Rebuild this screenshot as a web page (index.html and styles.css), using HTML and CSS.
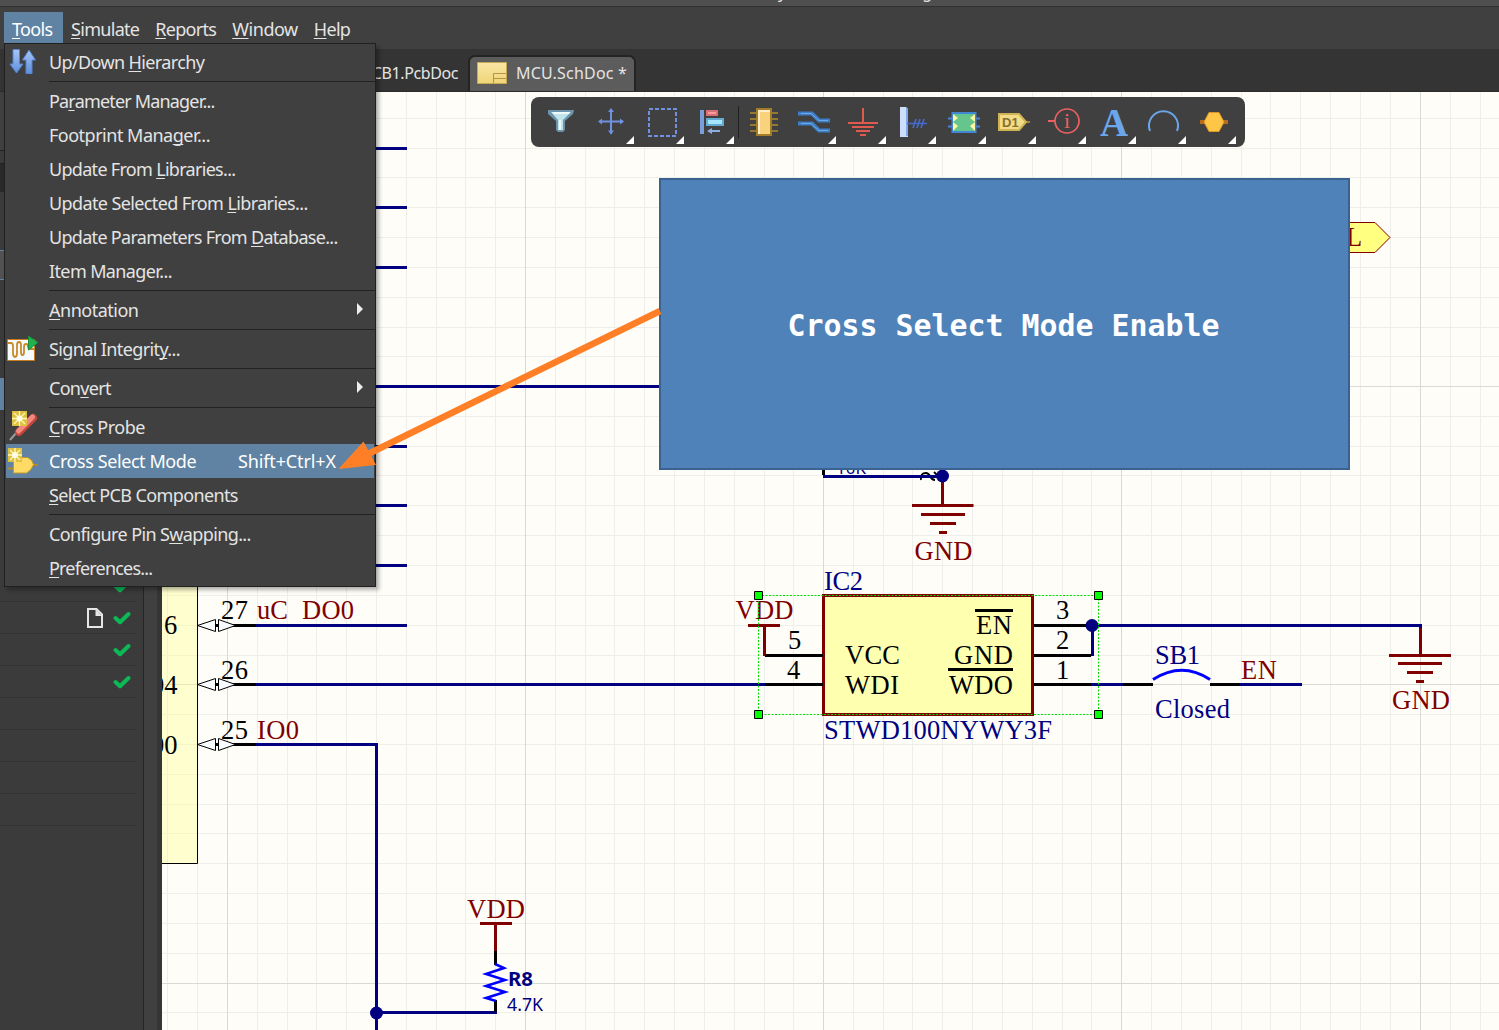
FILE: index.html
```html
<!DOCTYPE html>
<html lang="en">
<head>
<meta charset="utf-8">
<title>MCU.SchDoc</title>
<link rel="stylesheet" href="styles.css">
</head>
<body>
<div class="app">
  <div class="titlebar"><span>y</span><span>g</span></div>
  <nav class="menubar">
    <span class="menu-tab active"><u>T</u>ools</span>
    <span class="menu-tab"><u>S</u>imulate</span>
    <span class="menu-tab"><u>R</u>eports</span>
    <span class="menu-tab window"><u>W</u>indow</span>
    <span class="menu-tab"><u>H</u>elp</span>
  </nav>
  <div class="tabs">
    <div class="tab">PCB1.PcbDoc</div>
    <div class="tab current">
      <svg width="30" height="22" viewBox="0 0 30 22"><defs><linearGradient id="doc" x2="0" y2="1"><stop stop-color="#fae6a5"/><stop offset="1" stop-color="#efd578"/></linearGradient></defs><path d="M.5.5h29v21H.5z" fill="url(#doc)" stroke="#c7a955"/><path d="M16.500 21V11.500H29M17 16.500h12" fill="none" stroke="#b3954a"/></svg>
      <span>MCU.SchDoc *</span>
    </div>
  </div>
  <div class="workspace">
    <aside class="panel">
      <div class="strip">
        <i class="s1"></i><i class="s2"></i><i class="s3"></i><i class="s4"></i><i class="s5"></i><i class="s6"></i><i class="s7"></i>
      </div>
      <div class="files">
        <div class="file first"><svg class="check" viewBox="0 0 18 14"><path d="M2.500 7l4.500 4.200L15.500 3" /></svg></div>
        <div class="file"><svg class="page" viewBox="0 0 16 20"><path d="M1 1h8.500l5.500 5.500V19H1z" fill="none" stroke="#e6e6e6" stroke-width="2"/><path d="M8.500 1v7H15z" fill="#e6e6e6"/></svg><svg class="check" viewBox="0 0 18 14"><path d="M2.500 7l4.500 4.200L15.500 3" /></svg></div>
        <div class="file"><svg class="check" viewBox="0 0 18 14"><path d="M2.500 7l4.500 4.200L15.500 3" /></svg></div>
        <div class="file"><svg class="check" viewBox="0 0 18 14"><path d="M2.500 7l4.500 4.200L15.500 3" /></svg></div>
        <div class="file"></div><div class="file"></div><div class="file"></div><div class="file"></div>
      </div>
    </aside>
    <div class="splitter"></div>
    <svg class="sheet" viewBox="162 92 1337 938" width="1337" height="938">
      <path class="grid" d="M167.500 92v938M197.500 92v938M257.500 92v938M287.500 92v938M316.500 92v938M346.500 92v938M376.500 92v938M406.500 92v938M436.500 92v938M465.500 92v938M495.500 92v938M555.500 92v938M585.500 92v938M614.500 92v938M644.500 92v938M674.500 92v938M704.500 92v938M734.500 92v938M764.500 92v938M793.500 92v938M853.500 92v938M883.500 92v938M912.500 92v938M942.500 92v938M972.500 92v938M1002.500 92v938M1032.500 92v938M1062.500 92v938M1091.500 92v938M1151.500 92v938M1181.500 92v938M1211.500 92v938M1241.500 92v938M1270.500 92v938M1300.500 92v938M1330.500 92v938M1360.500 92v938M1390.500 92v938M1450.500 92v938M1480.500 92v938"/>
      <path class="grid" d="M162 118.500h1337M162 148.500h1337M162 177.500h1337M162 207.500h1337M162 237.500h1337M162 267.500h1337M162 297.500h1337M162 327.500h1337M162 356.500h1337M162 416.500h1337M162 446.500h1337M162 475.500h1337M162 505.500h1337M162 535.500h1337M162 565.500h1337M162 595.500h1337M162 625.500h1337M162 655.500h1337M162 714.500h1337M162 744.500h1337M162 774.500h1337M162 804.500h1337M162 833.500h1337M162 863.500h1337M162 893.500h1337M162 923.500h1337M162 953.500h1337M162 1012.500h1337"/>
      <path class="grid major" d="M227.500 92v938M525.500 92v938M823.500 92v938M1121.500 92v938M1420.500 92v938M162 386.500h1337M162 684.500h1337M162 983.500h1337"/>
      <!-- microcontroller edge -->
      <path d="M160 500h37.500v363.500H160" fill="#ffff80" fill-opacity=".35" stroke="#000"/>
      <g class="sheet-text pin">
        <text x="164" y="634">6</text><text x="151" y="694">04</text><text x="151" y="754">00</text>
        <text x="221" y="619" textLength="27">27</text><text x="221" y="679" textLength="27">26</text><text x="221" y="739" textLength="27">25</text>
      </g>
      <path d="M232 625.500h24M232 684.500h24M232 744.500h24" stroke="#000" stroke-width="3"/>
      <path d="M197.500 625.500l18-6v12zM218.500 619.500v12l17-6zM197.500 684.500l18-6v12zM218.500 678.500v12l17-6zM197.500 744.500l18-6v12zM218.500 738.500v12l17-6z" fill="#f8fbff" stroke="#000"/>
      <path d="M215 625.500h4M215 684.500h4M215 744.500h4" stroke="#000" stroke-width="3"/>
      <path class="wire" d="M370 148.500h37M370 207.500h37M370 267.500h37M370 386.500h300M370 446.500h37M370 505.500h37M370 565.500h37M256 625.500h151M256 684.500h509M256 744.500h120.500V1030M376.500 1012.500H497M823 476.500h120M1092 625.500h328.500V629M1092.500 625v31M1091 684.500h32M1240 684.500h62"/>
      <g class="sheet-text red">
        <text x="257" y="619" textLength="31">uC</text><text x="302" y="619" textLength="52">DO0</text>
        <text x="257" y="739" textLength="42">IO0</text>
        <text x="467" y="918" textLength="58">VDD</text>
        <text x="735.500" y="619" textLength="58">VDD</text>
        <text x="914.500" y="560" textLength="58">GND</text>
        <text x="1392" y="709" textLength="58">GND</text>
        <text x="1241" y="679" textLength="36">EN</text>
      </g>
      <circle class="dot" cx="376.500" cy="1013" r="6.500"/>
      <!-- pull-up resistor -->
      <path class="power" d="M480 923.500h32M495.500 923v29M748 625.500h32M764.500 625v31M942.500 480v26M912 505.500h61.500M921 514.500h44M930 523.500h26M939 532.500h8M1420.500 628v27M1389 655.500h62M1398 663.500h44M1407 672.500h26M1416 681.500h8"/>
      <path d="M495.500 951v14M495.500 1000v12" stroke="#000" stroke-width="3"/>
      <path d="M495 964l9 4-18 6 19 6-19 6 19 6-19 6 10 3" fill="none" stroke="#00f" stroke-width="2.500"/>
      <text class="ui-label" x="508" y="986" font-weight="700" font-size="19" textLength="25" lengthAdjust="spacingAndGlyphs">R8</text>
      <text class="ui-label" x="507" y="1011" font-size="17.500" textLength="36" lengthAdjust="spacingAndGlyphs">4.7K</text>
      <!-- watchdog IC -->
      <rect x="823.500" y="595.500" width="209" height="119" fill="#ffffb0" stroke="#800000" stroke-width="3"/>
      <path d="M765 655.500h58M765 684.500h58M1034 625.500h55M1034 655.500h57M1034 684.500h57M975 610.500h38M948 669.500h65M1123 684.500h30M1210 684.500h30" stroke="#000" stroke-width="3"/>
      <g class="sheet-text pin">
        <text x="788" y="649">5</text><text x="787" y="679">4</text>
        <text x="1056" y="619">3</text><text x="1056" y="649">2</text><text x="1056" y="679">1</text>
        <text x="845" y="664" textLength="55">VCC</text><text x="845" y="694" textLength="54">WDI</text>
        <text x="976" y="634" textLength="36">EN</text><text x="954" y="664" textLength="59">GND</text><text x="949" y="694" textLength="64">WDO</text>
      </g>
      <g class="sheet-text blue">
        <text x="824" y="590" textLength="39">IC2</text>
        <text x="824" y="739" textLength="228">STWD100NYWY3F</text>
        <text x="1155" y="664" textLength="45">SB1</text>
        <text x="1155" y="718" textLength="75">Closed</text>
      </g>
      <path d="M1153 679.500q29-18.500 57 0" fill="none" stroke="#00f" stroke-width="3"/>
      <circle class="dot" cx="1092" cy="625.500" r="6.500"/>
      <path d="M758.500 595.500h340v119h-340z" fill="none" stroke="#00e000" stroke-dasharray="2 1.500"/>
      <path d="M754.500 591.500h8v8h-8zM1094.500 591.500h8v8h-8zM754.500 710.500h8v8h-8zM1094.500 710.500h8v8h-8z" fill="#0f0" stroke="#000"/>
      <!-- parts partly behind the callout -->
      <path d="M823.500 468v7" stroke="#000" stroke-width="3"/>
      <text class="ui-label" x="836" y="474" font-size="17" textLength="30">10K</text>
      <path d="M921 480q-1-7 5-7c5 0 3 7 9 7M934 472l4 4" fill="none" stroke="#000" stroke-width="1.800"/>
      <path class="wire" d="M915 476.500h25"/>
      <circle class="dot" cx="942.500" cy="476" r="6.500"/>
      <path d="M1340 222.500h35l15 15-15 15h-35z" fill="#ffff80" stroke="#800000"/>
      <text class="sheet-text red" x="1346" y="246">L</text>
    </svg>
  </div>

  <div class="toolbar">
    <svg width="714" height="50" viewBox="531 97 714 50">
      <path d="M548 110h26l-1 4-8 7v9l-2 2h-5l-2-2v-9l-8-7z" fill="#6d93ad"/><path d="M551 112h20l-8 8v10h-5V120z" fill="#c0e4ea"/><path d="M552 112h18l-1 2h-15zM559 120h2v10h-2z" fill="#eefafa"/>
      <g fill="none" stroke="#7090e0" stroke-width="2"><path d="M611 110v24M600 121.500h23"/><path d="M649 109h27v27h-27z" stroke-dasharray="4 2"/></g>
      <path d="M611 108l3 4h-6zM611 134.500l3-4h-6zM598 121.500l4-3v6zM624 121.500l-4-3v6z" fill="#7090e0"/>
      <path d="M700 110h4v24h-4z" fill="#799fdb"/><path d="M706 110h12v6h-12z" fill="#d76e73"/><path d="M708 112h8v2h-8z" fill="#ff9c99"/><path d="M706 118h18v8h-18z" fill="#64aace"/><path d="M708 120h14v4h-14z" fill="#a5e6ff"/><path d="M707 131l5-3v2h8v2h-8v2z" fill="#8eace0"/>
      <path d="M738.500 106v32" stroke="#202020"/>
      <path d="M750 113h28M750 119h28M750 125h28M750 131h28" stroke="#967931" stroke-width="2"/><path d="M756 108h16v28h-16z" fill="#a17d2a"/><path d="M758 110h12v24h-12z" fill="#f8d27c"/><path d="M758 110h12v2h-10v22h-2z" fill="#ffedca"/>
      <g fill="none"><path d="M798 113.500h14l7 7h11M798 123.500h14l7 7h11" stroke="#3c7fc8" stroke-width="4"/><path d="M801 113.500h10l8 7h9M801 123.500h10l8 7h9" stroke="#6fa9e2"/></g>
      <path d="M863 108v15M848 123h30M852 127h22M856 131h14M860 135h6" stroke="#e05a50" stroke-width="2"/>
      <path d="M900 107h6l2 2v28h-8z" fill="#cddffa"/><path d="M906 108h2v28h-2z" fill="#80a9e9"/><path d="M907 123.500h20M913 128l3-9M917 128l3-9M921 128l3-9" stroke="#4668c9" stroke-width="1.700"/>
      <path d="M948 118.500h32M948 126.500h32" stroke="#4b82db" stroke-width="2"/><path d="M952.500 113h23v19h-23z" fill="#66c48d" stroke="#4285d2" stroke-width="2"/><path d="M953 114l5 4-5 4 5 4-5 5zM975 114l-5 4 5 4-5 4 5 5z" fill="#fcf6a0"/>
      <path d="M1022 122h8" stroke="#a18435" stroke-width="2"/><path d="M999 114h20l7 8-7 8h-20z" fill="#f3dc87" stroke="#d0b352" stroke-width="2"/><text x="1002" y="127" class="tag">D1</text>
      <circle cx="1067" cy="121" r="12" fill="none" stroke="#ed6062" stroke-width="1.700"/><path d="M1048 121h7" stroke="#ed6062" stroke-width="2"/><text x="1067" y="128" class="info">i</text>
      <text x="1114" y="136" class="letter">A</text>
      <path d="M1150 131a14.500 14.500 0 1 1 27 0" fill="none" stroke="#6aa5e8" stroke-width="2"/>
      <path d="M1200 122h28" stroke="#b96b1d" stroke-width="4"/><path d="M1209 112.500h10l5 9.500-5 9.500h-10l-5-9.500z" fill="#ffc547" stroke="#dd9726"/>
      <path fill="#fff" d="M634 136v8h-8zM684 136v8h-8zM734 136v8h-8zM836 136v8h-8zM886 136v8h-8zM936 136v8h-8zM986 136v8h-8zM1036 136v8h-8zM1086 136v8h-8zM1136 136v8h-8zM1186 136v8h-8zM1236 136v8h-8z"/>
    </svg>
  </div>

  <div class="callout">Cross Select Mode Enable</div>

  <div class="menu">
    <div class="item"><svg class="icon" viewBox="6 46 32 32"><defs><linearGradient id="blue" x2="0" y2="1"><stop stop-color="#a9c6f5"/><stop offset="1" stop-color="#5d8ee0"/></linearGradient></defs><path d="M13 49.500h6.500V64H23l-6.500 9L10 64h3zM26 73.500V60h-3.500l6.500-10 6.500 10H32v13.500z" fill="url(#blue)" stroke="#5684cf"/></svg><span>Up/Down <u>H</u>ierarchy</span></div>
    <hr>
    <div class="item tight"><span>Pa<u>r</u>ameter Manager...</span></div>
    <div class="item loose"><span>Footprint Mana<u>g</u>er...</span></div>
    <div class="item snug"><span>Update From <u>L</u>ibraries...</span></div>
    <div class="item"><span>Update Selected From <u>L</u>ibraries...</span></div>
    <div class="item snug"><span>Update Parameters From <u>D</u>atabase...</span></div>
    <div class="item"><span>Item Manager...</span></div>
    <hr>
    <div class="item loose"><span><u>A</u>nnotation</span><i class="more"></i></div>
    <hr>
    <div class="item"><svg class="icon" viewBox="6 333 32 32"><path d="M7.500 339.500h27v21h-27z" fill="#f6faff" stroke="#c77c1f"/><path d="M8 343h3q2 0 2 3v7q0 4 2 4t2-4v-8q0-3 2-3t2 3v7q0 3 1.500 3t1.500-3v-5q0-3 2-3t2 3q0 2 3 2h4" fill="none" stroke="#c98926" stroke-width="1.800"/><path d="M28.500 336v14l9.500-7.500z" fill="#23b14d" stroke="#158f39"/></svg><span>Signal Integrit<u>y</u>...</span></div>
    <hr>
    <div class="item snug"><span>Con<u>v</u>ert</span><i class="more"></i></div>
    <hr>
    <div class="item loose"><svg class="icon" viewBox="6 411 32 32"><path d="M10 440l7-8" stroke="#999" stroke-width="2"/><path d="M19 432l14-14" stroke="#c6463d" stroke-width="8" stroke-linecap="round"/><path d="M18.500 431l14-14" stroke="#f08a80" stroke-width="5" stroke-linecap="round"/><path d="M12 411h15v15H12z" fill="#dfc040"/><path d="M19.500 411v15M12 418.500h15M14 413l11 11M25 413l-11 11" stroke="#fff8b8" stroke-width="1.300"/><circle cx="19.500" cy="418.500" r="3" fill="#fffde6"/></svg><span><u>C</u>ross Probe</span></div>
    <div class="item selected"><svg class="icon" viewBox="6 445 32 32"><path d="M8 468.500h6M32 465h6" stroke="#b48b20" stroke-width="2"/><path d="M13.500 457.500h14q5 2 6 7-2 6-7 8.500h-13z" fill="#ffdb65" stroke="#c49a28"/><path d="M8 448h14v14H8z" fill="#dfc040"/><path d="M15 448v14M8 455h14M10 450l10 10M20 450l-10 10" stroke="#fff8b8" stroke-width="1.300"/><circle cx="15" cy="455" r="3" fill="#fffde6"/></svg><span>Cross Select Mode</span><span class="keys">Shift+Ctrl+X</span></div>
    <div class="item"><span><u>S</u>elect PCB Components</span></div>
    <hr>
    <div class="item"><span>Configure Pin S<u>w</u>apping...</span></div>
    <div class="item tight"><span><u>P</u>references...</span></div>
  </div>

  <svg class="arrow" viewBox="330 300 340 180" width="340" height="180"><path d="M660 311L368 454" stroke="#ff7f27" stroke-width="6.500"/><path d="M338.500 469l25-27.500L376 465z" fill="#ff7f27"/></svg>
</div>
</body>
</html>
```
FILE: styles.css
```css
* { box-sizing: border-box; }
body { margin: 0; background: #404040; font-family: "Noto Sans", "Open Sans", sans-serif; color: #e4e4e4; }
u { text-decoration-thickness: 1px; text-underline-offset: 2px; text-decoration-skip-ink: none; }
.app { position: relative; width: 1499px; height: 1030px; overflow: hidden; display: flex; flex-direction: column; }
.titlebar { height: 7px; background: #4f4f4f; border-bottom: 1px solid #303030; overflow: hidden; display: flex; gap: 136px; padding-left: 778px; font-size: 16px; line-height: 20px; }
.titlebar span { height: 20px; margin-top: -18px; }
.menubar { height: 42px; padding: 5px 0 0 4px; display: flex; align-items: flex-start; font-size: 18px; letter-spacing: -.7px; }
.menu-tab { height: 32px; line-height: 34px; padding: 0 8px; white-space: nowrap; }
.menu-tab.active { background: #6083a3; color: #fff; width: 59px; }
.menu-tab.window { letter-spacing: -.45px; }
.tabs { height: 43px; background: #343434; border-bottom: 1px solid #2b2b2b; display: flex; align-items: flex-end; font-size: 16px; }
.tab { width: 468px; padding: 0 10px 0 0; height: 36px; line-height: 37px; text-align: right; letter-spacing: -.4px; }
.tab.current { width: 168px; background: #5c5c5c; border: 2px solid #242424; border-bottom: 0; border-radius: 7px 7px 0 0; display: flex; align-items: center; padding: 0 0 2px 7px; gap: 9px; white-space: nowrap; line-height: 30px; letter-spacing: .2px; }
.workspace { flex: 1; display: flex; min-height: 0; }
.panel { width: 144px; background: #3b3b3b; border-right: 1px solid #252525; display: flex; flex-direction: column; }
.strip { width: 6px; height: 478px; display: flex; flex-direction: column; }
.strip i { display: block; }
.s1 { height: 58px; background: #404040; }
.s2 { height: 14px; border-top: 1px solid #222; border-bottom: 1px solid #222; }
.s3 { height: 28px; background: #292929; }
.s4 { height: 58px; background: #3b3b3b; }
.s5 { height: 30px; background: #525252; border: 1px solid #6083a3; border-width: 1px 0; }
.s6 { height: 98px; }
.s7 { height: 32px; background: #6083a3; }
.files { width: 136px; }
.file { height: 32px; border-bottom: 1px solid #333; display: flex; align-items: center; justify-content: flex-end; gap: 10px; padding-right: 5px; }
.check { width: 18px; height: 14px; fill: none; stroke: #0cb956; stroke-width: 4; stroke-linecap: round; stroke-linejoin: round; }
.page { width: 16px; height: 20px; }
.splitter { width: 18px; background: #404040; border-right: 5px solid #353535; }
.sheet { display: block; background: #fffdf8; }
.grid { stroke: #eeefeb; fill: none; }
.grid.major { stroke: #d8dad6; }
.wire { stroke: #000080; stroke-width: 3; fill: none; }
.power { stroke: #800000; stroke-width: 3; fill: none; }
.dot { fill: #000080; }
.sheet-text { font-family: "Liberation Serif", serif; font-size: 26.5px; }
.pin { fill: #000; }
.red { fill: #800000; }
.blue { fill: #000080; }
.ui-label { fill: #000080; }
.toolbar { position: absolute; left: 531px; top: 97px; width: 714px; height: 50px; background: #404040; border-radius: 8px; }
.toolbar svg { display: block; }
.tag { font: bold 13px "Liberation Sans", sans-serif; fill: #88702e; }
.info { font: 22px "Liberation Serif", serif; fill: #ed6062; text-anchor: middle; }
.letter { font: bold 39px "Liberation Serif", serif; fill: #6ba6ea; text-anchor: middle; }
.callout { position: absolute; left: 659px; top: 178px; width: 691px; height: 292px; background: #4f82b9; border: 2px solid #3a6190; display: flex; align-items: center; justify-content: center; color: #fff; font: bold 29.900px "DejaVu Sans Mono", monospace; padding: 2px 2px 0 0; }
.menu { position: absolute; left: 4px; top: 43px; width: 372px; height: 544px; padding: 1px 0 0 1px; border: 1px solid #202020; background: #404040; box-shadow: 3px 3px 4px rgba(0,0,0,.3); font-size: 18px; letter-spacing: -.62px; }
.item { position: relative; height: 34px; line-height: 35px; padding-left: 43px; display: flex; white-space: nowrap; }
.item.tight { letter-spacing: -.82px; }
.item.snug { letter-spacing: -.7px; }
.item.loose { letter-spacing: -.5px; }
.item.selected { background: #6083a3; color: #fff; width: 368px; letter-spacing: -.42px; }
.icon { position: absolute; left: 0; top: 1px; width: 32px; height: 32px; }
.keys { position: absolute; left: 232px; top: 0; letter-spacing: -.13px; }
.more { position: absolute; right: 12px; top: 10px; border: solid transparent; border-width: 6px 0 6px 6px; border-left-color: #eee; }
hr { height: 1px; margin: 2px 0 2px 43px; border: 0; background: #222; }
.arrow { position: absolute; left: 330px; top: 300px; }
```
